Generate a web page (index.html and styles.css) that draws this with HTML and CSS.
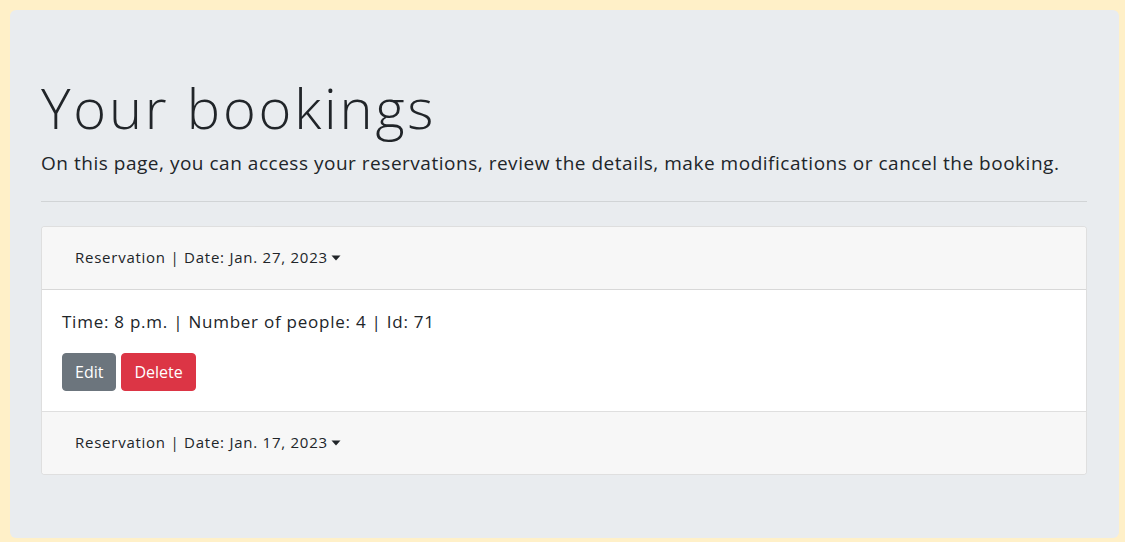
FILE: index.html
```html
<!DOCTYPE html>
<html lang="en">
<head>
<meta charset="utf-8">
<title>Your bookings</title>
<link rel="stylesheet" href="styles.css">
</head>
<body>
<main class="jumbotron">
  <h1 class="display">Your bookings</h1>
  <p class="lead">On this page, you can access your reservations, review the details, make modifications or cancel the booking.</p>
  <hr class="divider">
  <div class="accordion">
    <div class="card">
      <div class="card-header">
        <button class="toggle" type="button">Reservation | Date: Jan. 27, 2023 <svg class="caret" width="10" height="6" viewBox="0 0 10 6"><path d="M0.5 0.5h9L5 5.5z" fill="#212529"/></svg></button>
      </div>
      <div class="card-body">
        <p class="details">Time: 8 p.m. | Number of people: 4 | Id: 71</p>
        <div class="actions">
          <a class="btn btn-secondary" href="#">Edit</a>
          <a class="btn btn-danger" href="#">Delete</a>
        </div>
      </div>
    </div>
    <div class="card card-last">
      <div class="card-header">
        <button class="toggle" type="button">Reservation | Date: Jan. 17, 2023 <svg class="caret" width="10" height="6" viewBox="0 0 10 6"><path d="M0.5 0.5h9L5 5.5z" fill="#212529"/></svg></button>
      </div>
    </div>
  </div>
</main>
</body>
</html>
```

FILE: styles.css
```css
* { box-sizing: border-box; }

html, body { height: 100%; }

body {
  margin: 0;
  padding: 10px 6px 5px 10px;
  background: #fff0c8;
  font-family: "Open Sans", "Liberation Sans", sans-serif;
  color: #212529;
}

.jumbotron {
  background: #e9ecef;
  border-radius: 6px;
  padding: 64px 32px 63px 31px;
}

.display {
  margin: 0 0 7px;
  font-size: 56px;
  font-weight: 300;
  line-height: 67px;
  letter-spacing: 2.8px;
}

.lead {
  margin: 0;
  font-size: 19px;
  font-weight: 400;
  line-height: 30px;
  letter-spacing: 0.52px;
}

.divider {
  margin: 23px 0 24px;
  border: 0;
  border-top: 1px solid rgba(0,0,0,0.1);
  height: 0;
}

.accordion { display: flex; flex-direction: column; }

.card {
  background: #fff;
  border: 1px solid rgba(0,0,0,0.125);
  border-bottom: 0;
  border-radius: 4px 4px 0 0;
  overflow: hidden;
}

.card-last {
  border-bottom: 1px solid rgba(0,0,0,0.125);
  border-radius: 0 0 4px 4px;
}

.card-header {
  background: #f7f7f7;
  padding: 12px 20px;
  border-bottom: 1px solid rgba(0,0,0,0.125);
}

.card-last .card-header { border-bottom: 0; }

.toggle {
  display: inline-flex;
  align-items: center;
  gap: 3px;
  background: none;
  border: 1px solid transparent;
  padding: 5px 12px 7px;
  font-family: inherit;
  font-size: 15px;
  line-height: 24px;
  letter-spacing: 0.75px;
  color: #212529;
  cursor: pointer;
}

.caret { display: block; margin-top: 2px; }

.card-body { padding: 18px 20px 20px; }

.details {
  margin: 0 0 18px;
  font-size: 17px;
  line-height: 27px;
  letter-spacing: 0.75px;
}

.actions { display: flex; gap: 5px; }

.btn {
  display: inline-block;
  padding: 6px 12px;
  border: 1px solid transparent;
  border-radius: 4px;
  font-size: 16px;
  line-height: 24px;
  letter-spacing: 0;
  color: #fff;
  text-decoration: none;
}

.btn-secondary { background: #6c757d; border-color: #6c757d; }
.btn-danger { background: #dc3545; border-color: #dc3545; }
```
